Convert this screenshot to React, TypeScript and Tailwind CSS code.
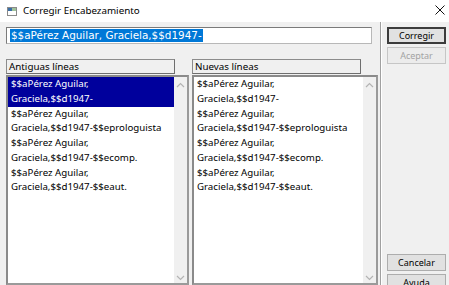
import React from "react";

const items = [
  ["$$aPérez Aguilar,", "Graciela,$$d1947-"],
  ["$$aPérez Aguilar,", "Graciela,$$d1947-$$eprologuista"],
  ["$$aPérez Aguilar,", "Graciela,$$d1947-$$ecomp."],
  ["$$aPérez Aguilar,", "Graciela,$$d1947-$$eaut."],
];

function UpArrow() {
  return (
    <svg width="9" height="6" viewBox="0 0 9 6">
      <path d="M1 5 L4.5 1.5 L8 5" fill="none" stroke="#b4b4b4" strokeWidth="1.2" />
    </svg>
  );
}
function DownArrow() {
  return (
    <svg width="9" height="6" viewBox="0 0 9 6">
      <path d="M1 1 L4.5 4.5 L8 1" fill="none" stroke="#b4b4b4" strokeWidth="1.2" />
    </svg>
  );
}

function Panel({ title, selected, width }: { title: string; selected: boolean; width: string }) {
  return (
    <div className={`flex flex-col ${width}`}>
      <div className="w-[169px] h-[15px] border border-[#8c8c8c] border-b-[#6e6e6e] border-r-[#6e6e6e] bg-[#f0f0f0] flex items-center pl-[2px] text-[9.8px] leading-none text-black shrink-0">
        {title}
      </div>
      <div className="mt-[1px] flex-1 flex border-2 border-t-[#8a8a8a] border-l-[#8a8a8a] border-r-[#9a9a9a] border-b-[#9a9a9a] bg-white min-h-0">
        <div className="flex-1 flex flex-col">
          {items.map((it, i) => (
            <div
              key={i}
              className={`h-[29.5px] shrink-0 pl-[3px] text-[9.7px] leading-[14.5px] ${
                selected && i === 0 ? "bg-[#00009c] text-white" : "text-black"
              }`}
            >
              <div>{it[0]}</div>
              <div>{it[1]}</div>
            </div>
          ))}
        </div>
        <div className="w-[13px] bg-[#f0f0f0] flex flex-col items-center justify-between pt-[5px] pb-[2px]">
          <UpArrow />
          <DownArrow />
        </div>
      </div>
    </div>
  );
}

function Btn({ label, def, disabled }: { label: string; def?: boolean; disabled?: boolean }) {
  const cls = disabled
    ? "border border-[#c6c6c6] bg-[#ececec] text-[#a3a3a3]"
    : def
    ? "border-2 border-[#3c3c3c] bg-[#e1e1e1] text-black"
    : "border border-[#adadad] bg-[#e1e1e1] text-black";
  return (
    <div className={`w-[59px] h-[17px] shrink-0 flex items-center justify-center text-[9px] leading-none ${cls}`}>
      {label}
    </div>
  );
}

export default function App() {
  return (
    <div
      className="w-[449px] h-[285px] overflow-hidden bg-[#f0f0f0] flex flex-col"
      style={{ fontFamily: '"Noto Sans", "Open Sans", sans-serif' }}
    >
      <div className="h-[22px] bg-white flex items-center shrink-0 relative">
        <svg className="ml-[7px]" width="10" height="9" viewBox="0 0 10 9">
          <rect x="0.5" y="0.5" width="9" height="8" fill="#ffffff" stroke="#8a8a8a" />
          <rect x="1" y="1" width="4" height="3" fill="#3a6ea5" />
          <rect x="5" y="1" width="4" height="3" fill="#9fc29a" />
        </svg>
        <span className="ml-[6px] text-[9.8px] text-black leading-none">Corregir Encabezamiento</span>
        <svg className="absolute left-[435px] top-[5px]" width="10" height="10" viewBox="0 0 10 10">
          <path d="M0.5 0.5 L9.5 9.5 M9.5 0.5 L0.5 9.5" stroke="#111" strokeWidth="1" />
        </svg>
      </div>
      <div className="flex flex-1 min-h-0">
        <div className="w-[380px] pl-[6px] pt-[5px] flex flex-col">
          <div className="w-[366px] h-[17px] border border-[#7a7a7a] border-r-[#b8b8b8] border-b-[#b8b8b8] bg-white flex items-center pl-[3px] shrink-0">
            <span
              className="bg-[#0078d7] text-white text-[10.4px] leading-[13px] px-[1px]"
              style={{ fontFamily: '"DejaVu Sans", sans-serif' }}
            >
              $$aPérez Aguilar, Graciela,$$d1947-
            </span>
          </div>
          <div className="flex mt-[15px] flex-1 min-h-0 gap-[3px]">
            <Panel title="Antiguas líneas" selected={true} width="w-[183px]" />
            <Panel title="Nuevas líneas" selected={false} width="w-[186px]" />
          </div>
        </div>
        <div className="w-[2px] border-l border-[#a0a0a0] border-r border-r-white" />
        <div className="pl-[5px] pt-[5px] flex flex-col gap-[3px]">
          <Btn label="Corregir" def />
          <Btn label="Aceptar" disabled />
          <div className="mt-[187px] shrink-0 flex flex-col gap-[3px]">
            <Btn label="Cancelar" />
            <Btn label="Ayuda" />
          </div>
        </div>
      </div>
    </div>
  );
}
